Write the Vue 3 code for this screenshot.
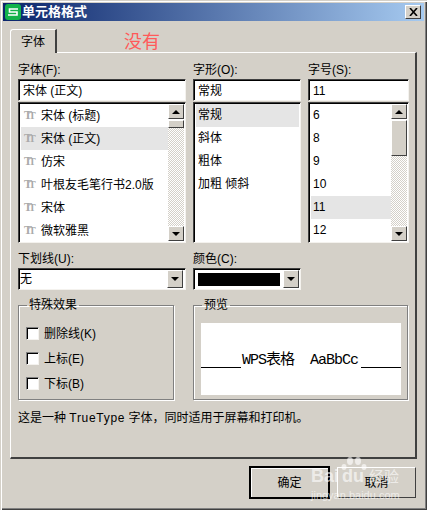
<script setup>
const fontRows = [
  { name: '宋体 (标题)' },
  { name: '宋体 (正文)', selected: true },
  { name: '仿宋' },
  { name: '叶根友毛笔行书2.0版' },
  { name: '宋体' },
  { name: '微软雅黑' },
]
const styleRows = [
  { name: '常规', selected: true },
  { name: '斜体' },
  { name: '粗体' },
  { name: '加粗 倾斜' },
]
const sizeRows = [
  { name: '6' },
  { name: '8' },
  { name: '9' },
  { name: '10' },
  { name: '11', selected: true },
  { name: '12' },
]
const effects = ['删除线(K)', '上标(E)', '下标(B)']
</script>

<template>
  <div class="window">
    <header class="titlebar">
      <svg class="app-icon" width="16" height="16" viewBox="0 0 16 16">
        <rect width="16" height="16" rx="3" fill="#12b24a" />
        <path d="M13 5H4.5v3h7.5v3H3" fill="none" stroke="#fff" stroke-width="1.6" />
      </svg>
      <span class="title-text">单元格格式</span>
      <button class="close-btn">
        <svg width="9" height="8" viewBox="0 0 9 8">
          <path d="M1 0l7 8M8 0L1 8" stroke="#000" stroke-width="1.6" />
        </svg>
      </button>
    </header>

    <div class="tabs">
      <div class="tab">字体</div>
      <div class="note-red">没有</div>
    </div>

    <section class="panel">
      <div class="columns">
        <div class="column">
          <label>字体(F):</label>
          <div class="input sunken">宋体 (正文)</div>
          <div class="list sunken">
            <div class="rows">
              <div v-for="row in fontRows" :key="row.name" class="row font-row" :class="{ selected: row.selected }">
                <span class="tt" aria-hidden="true">T<i>T</i></span>{{ row.name }}
              </div>
            </div>
            <div class="scrollbar">
              <div class="sb-btn"><span class="arrow up"></span></div>
              <div class="sb-thumb small"></div>
              <div class="sb-track"></div>
              <div class="sb-btn"><span class="arrow"></span></div>
            </div>
          </div>
        </div>
        <div class="column">
          <label>字形(O):</label>
          <div class="input sunken">常规</div>
          <div class="list sunken">
            <div class="rows">
              <div v-for="row in styleRows" :key="row.name" class="row" :class="{ selected: row.selected }">{{ row.name }}</div>
            </div>
          </div>
        </div>
        <div class="column">
          <label>字号(S):</label>
          <div class="input sunken">11</div>
          <div class="list sunken">
            <div class="rows">
              <div v-for="row in sizeRows" :key="row.name" class="row" :class="{ selected: row.selected }">{{ row.name }}</div>
            </div>
            <div class="scrollbar">
              <div class="sb-btn"><span class="arrow up"></span></div>
              <div class="sb-thumb large"></div>
              <div class="sb-track"></div>
              <div class="sb-btn"><span class="arrow"></span></div>
            </div>
          </div>
        </div>
      </div>

      <div class="combos">
        <div class="combo-col">
          <label>下划线(U):</label>
          <div class="combo sunken">
            <span class="combo-value">无</span>
            <div class="sb-btn"><span class="arrow"></span></div>
          </div>
        </div>
        <div class="combo-col">
          <label>颜色(C):</label>
          <div class="combo sunken">
            <span class="swatch"></span>
            <div class="sb-btn"><span class="arrow"></span></div>
          </div>
        </div>
      </div>

      <div class="groups">
        <fieldset class="group effects">
          <legend>特殊效果</legend>
          <div v-for="item in effects" :key="item" class="check-row">
            <span class="checkbox"></span>{{ item }}
          </div>
        </fieldset>
        <fieldset class="group preview-group">
          <legend>预览</legend>
          <div class="preview">
            <span class="rule"></span>
            <span class="preview-text">WPS表格&nbsp;&nbsp;AaBbCc</span>
            <span class="rule"></span>
          </div>
        </fieldset>
      </div>

      <p class="hint">这是一种 <span class="latin">TrueType</span> 字体，同时适用于屏幕和打印机。</p>
    </section>

    <footer class="actions">
      <button class="btn default">确定</button>
      <button class="btn">取消</button>
    </footer>

    <div class="watermark" aria-hidden="true">
      <svg class="paw" width="26" height="13" viewBox="0 0 26 13">
        <ellipse cx="3" cy="10" rx="2.5" ry="3" />
        <ellipse cx="9" cy="4" rx="3" ry="4" />
        <ellipse cx="17" cy="4" rx="3" ry="4" />
        <ellipse cx="23" cy="10" rx="2.5" ry="3" />
      </svg>
      <div class="wm-main">Bai<span class="wm-du">du</span><span class="wm-jy">经验</span></div>
      <div class="wm-url">jingyan.baidu.com</div>
    </div>
  </div>
</template>

<style>
html, body {
  margin: 0;
  background: #d4d0c8;
}
</style>

<style scoped>
.window {
  position: relative;
  width: 427px;
  height: 510px;
  box-sizing: border-box;
  padding: 3px 3px 0;
  background: #d4d0c8;
  box-shadow: inset 1px 1px 0 #d4d0c8, inset 2px 2px 0 #fff, inset -1px -1px 0 #404040, inset -2px -2px 0 #808080;
  overflow: hidden;
  color: #000;
  font-family: "Liberation Sans", "Noto Sans CJK SC", sans-serif;
  font-size: 12px;
  line-height: 14px;
}

.titlebar {
  height: 18px;
  display: flex;
  align-items: center;
  background: linear-gradient(90deg, #0a246a, #a6caf0);
  padding: 0 3px 0 2px;
  color: #fff;
}

.app-icon {
  flex: none;
}

.title-text {
  margin-left: 1px;
  font-size: 13px;
  font-weight: bold;
  flex: 1;
}

.close-btn {
  width: 16px;
  height: 14px;
  padding: 0;
  display: flex;
  align-items: center;
  justify-content: center;
  background: #d4d0c8;
  border: 1px solid;
  border-color: #fff #404040 #404040 #fff;
}

.tabs {
  display: flex;
  margin: 8px 0 0 7px;
  height: 23px;
}

.tab {
  width: 47px;
  box-sizing: border-box;
  height: 24px;
  padding-top: 5px;
  text-align: center;
  background: #d4d0c8;
  border-top: 1px solid #fff;
  border-left: 1px solid #fff;
  border-right: 2px solid #404040;
  border-top-left-radius: 3px;
  position: relative;
  z-index: 1;
}

.note-red {
  margin-left: 67px;
  margin-top: 3px;
  color: #ff5a5a;
  font-size: 18px;
  line-height: 20px;
}

.panel {
  width: 407px;
  height: 407px;
  margin-left: 7px;
  box-sizing: border-box;
  border-top: 1px solid #fff;
  border-left: 1px solid #fff;
  border-right: 2px solid #404040;
  border-bottom: 2px solid #404040;
  padding: 9px 0 0 7px;
}

.columns {
  display: grid;
  grid-template-columns: 168px 108px 101px;
  gap: 7px;
}

.column {
  display: flex;
  flex-direction: column;
}

label {
  display: block;
  box-sizing: border-box;
  height: 17px;
  padding-top: 1px;
}

.sunken {
  box-sizing: border-box;
  background: #fff;
  border: 1px solid;
  border-color: #404040 #f4f2ee #f4f2ee #404040;
  box-shadow: inset 1px 1px 0 #000;
}

.input {
  height: 22px;
  padding: 4px 0 0 4px;
}

.list {
  margin-top: 1px;
  height: 141px;
  display: flex;
  padding: 1px 1px 1px 2px;
}

.rows {
  flex: 1;
  min-width: 0;
}

.row {
  height: 23px;
  line-height: 22px;
  padding-left: 2px;
  white-space: nowrap;
}

.row.selected {
  background: #e5e5e5;
}

.font-row {
  padding-left: 3px;
  display: flex;
  align-items: center;
}

.tt {
  width: 17px;
  flex: none;
  color: #aaa;
  font-family: "Liberation Serif", serif;
  font-weight: bold;
  font-size: 12px;
  letter-spacing: -3px;
}

.tt i {
  font-style: normal;
  font-size: 10px;
}

.scrollbar {
  width: 16px;
  flex: none;
  display: flex;
  flex-direction: column;
}

.sb-btn {
  width: 16px;
  height: 15px;
  flex: none;
  box-sizing: border-box;
  display: flex;
  align-items: center;
  justify-content: center;
  background: #d4d0c8;
  border: 1px solid;
  border-color: #fff #404040 #404040 #fff;
}

.arrow {
  width: 0;
  height: 0;
  border-left: 4px solid transparent;
  border-right: 4px solid transparent;
  border-top: 4px solid #000;
}

.arrow.up {
  border-top: 0;
  border-bottom: 4px solid #000;
}

.sb-thumb {
  flex: none;
  box-sizing: border-box;
  background: #d4d0c8;
  border: 1px solid;
  border-color: #fff #404040 #404040 #fff;
  margin-top: 1px;
}

.sb-thumb.small {
  height: 8px;
}

.sb-thumb.large {
  height: 36px;
}

.sb-track {
  flex: 1;
  background: repeating-conic-gradient(#d4d0c8 0 25%, #fff 0 50%) 0 0 / 2px 2px;
}

.combos {
  display: grid;
  grid-template-columns: 168px 108px;
  gap: 7px;
  margin-top: 8px;
}

.combo {
  height: 22px;
  display: flex;
  align-items: center;
  padding: 2px 2px 2px 1px;
}

.combo-value {
  flex: 1;
}

.swatch {
  width: 82px;
  height: 13px;
  margin: 0 3px;
  flex: none;
  background: #000;
}

.combo .sb-btn {
  height: 18px;
}

.groups {
  display: grid;
  grid-template-columns: 156px 215px;
  gap: 19px;
  margin-top: 8px;
}

.group {
  margin: 0;
  min-width: 0;
  height: 102px;
  box-sizing: border-box;
  padding: 0;
  border: 1px solid #808080;
  box-shadow: 1px 1px 0 #fff, inset 1px 1px 0 #fff;
}

legend {
  margin-left: 1px;
  padding: 0 2px;
  line-height: 14px;
}

.effects {
  padding: 9px 0 0 7px;
}

.check-row {
  height: 25px;
  display: flex;
  align-items: center;
}

.checkbox {
  width: 13px;
  height: 13px;
  margin-right: 5px;
  box-sizing: border-box;
  background: #fff;
  border: 1px solid;
  border-color: #808080 #f4f2ee #f4f2ee #808080;
  box-shadow: inset 1px 1px 0 #000;
}

.preview-group {
  padding: 11px 0 0 7px;
}

.preview {
  width: 200px;
  height: 72px;
  background: #fff;
  display: flex;
  align-items: flex-end;
  padding-bottom: 27px;
  box-sizing: border-box;
}

.rule {
  width: 40px;
  height: 1px;
  flex: none;
  background: #000;
}

.preview-text {
  flex: 1;
  font-family: "Liberation Mono", "Noto Sans CJK SC", monospace;
  font-size: 15px;
  letter-spacing: -1px;
  line-height: 17px;
  margin-bottom: -1px;
  padding-left: 1px;
  white-space: pre;
}

.hint {
  margin: 11px 0 0;
}

.latin {
  letter-spacing: 0.7px;
}

.actions {
  display: flex;
  justify-content: flex-end;
  gap: 7px;
  margin: 7px 8px 0 0;
  align-items: center;
}

.btn {
  width: 79px;
  height: 31px;
  padding: 0;
  box-sizing: border-box;
  background: #d4d0c8;
  font: inherit;
  color: #000;
  border: 1px solid;
  border-color: #fff #404040 #404040 #fff;
}

.btn.default {
  width: 81px;
  height: 33px;
  border: 2px solid #000;
  box-shadow: inset 1px 1px 0 #fff;
}

/* baidu watermark lies over the buttons */
.watermark {
  position: absolute;
  left: 311px;
  top: 466px;
  width: 100px;
  color: rgba(255, 255, 255, 0.62);
  pointer-events: none;
}

.paw {
  position: absolute;
  left: 30px;
  top: -9px;
  fill: rgba(255, 255, 255, 0.62);
}

.wm-main {
  font-size: 18px;
  line-height: 20px;
  font-weight: bold;
  white-space: nowrap;
}

.wm-du {
  margin-left: 3px;
}

.wm-jy {
  margin-left: 5px;
  font-size: 15px;
  font-weight: normal;
}

.wm-url {
  margin-top: 2px;
  font-size: 11px;
  line-height: 13px;
  white-space: nowrap;
}
</style>
